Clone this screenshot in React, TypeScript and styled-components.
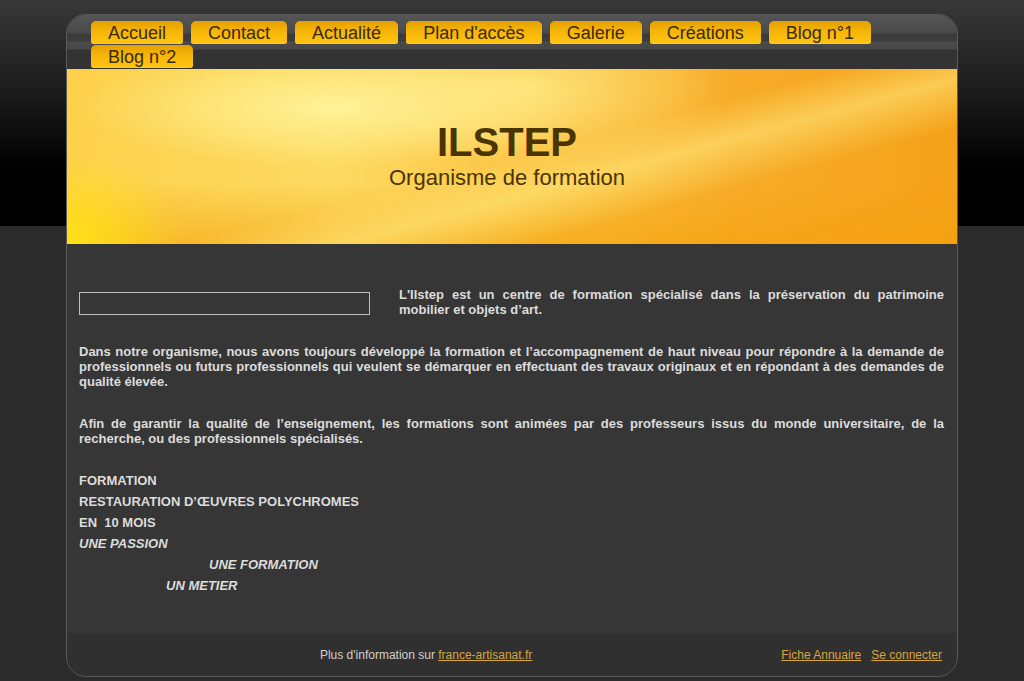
import styled, { createGlobalStyle } from 'styled-components';

const GlobalStyle = createGlobalStyle`
  html, body {
    margin: 0;
    padding: 0;
  }
  body {
    background: linear-gradient(
      to bottom,
      #383838 0,
      #1c1c1c 90px,
      #000 170px,
      #000 226px,
      #2b2b2b 226px
    );
    background-color: #2b2b2b;
    font-family: 'Liberation Sans', Arial, sans-serif;
  }
`;

const Page = styled.div`
  padding: 14px 0 5px;
`;

const Frame = styled.div`
  width: 890px;
  margin: 0 auto;
  border: 1px solid #5a5a5a;
  border-radius: 20px;
  overflow: hidden;
  background: #363636;
`;

const Nav = styled.nav`
  display: flex;
  flex-wrap: wrap;
  padding: 6px 0 0 24px;
  height: 54px;
  box-sizing: border-box;
  background: linear-gradient(
    to bottom,
    #555 0,
    #4a4a4a 18px,
    #3b3b3b 19px,
    #3d3d3d 26px,
    #4b4b4b 27px,
    #474747 34px,
    #333 35px,
    #333 100%
  );
`;

const Tab = styled.a`
  display: block;
  height: 23px;
  margin: 0 8px 1px 0;
  padding: 0 17px;
  font-size: 18px;
  line-height: 24px;
  color: #3a2a00;
  text-decoration: none;
  border-radius: 5px 5px 3px 3px;
  background: linear-gradient(to bottom, #e4a000 0, #f6b508 45%, #ffc514 100%);
  box-shadow: inset 0 -1px 0 rgba(255, 210, 60, 0.6);
`;

const Banner = styled.header`
  height: 175px;
  box-sizing: border-box;
  padding: 49px 10px 0 0;
  text-align: center;
  color: #4a3400;
  background:
    radial-gradient(ellipse 260px 60px at 30% 22%, rgba(255, 246, 160, 0.85), rgba(255, 246, 160, 0) 100%),
    radial-gradient(ellipse 200px 80px at 52% 10%, rgba(255, 238, 140, 0.7), rgba(255, 238, 140, 0) 100%),
    linear-gradient(165deg, rgba(255, 255, 255, 0) 50%, rgba(255, 236, 130, 0.55) 60%, rgba(255, 255, 255, 0) 72%),
    radial-gradient(ellipse 120px 90px at 0% 100%, rgba(255, 232, 20, 0.9), rgba(255, 232, 20, 0) 100%),
    linear-gradient(to top, rgba(244, 160, 10, 0.55) 0, rgba(244, 160, 10, 0) 35%),
    linear-gradient(90deg, #fcd04a 0%, #fdda62 30%, #fbc443 52%, #f7ab28 75%, #f5a21a 100%);
`;

const Title = styled.h1`
  margin: 0;
  font-size: 40px;
  line-height: 48px;
  font-weight: bold;
`;

const Subtitle = styled.div`
  font-size: 22px;
  line-height: 24px;
`;

const Content = styled.main`
  padding: 43px 13px 37px 12px;
  color: #dcdcdc;
  font-size: 13px;
  font-weight: bold;
  line-height: 15px;
`;

const Intro = styled.div`
  display: flex;
  gap: 29px;
  margin-bottom: 27px;
`;

const EmptyBox = styled.div`
  flex: 0 0 291px;
  height: 23px;
  margin-top: 5px;
  box-sizing: border-box;
  border: 1px solid #bdbdbd;
`;

const Para = styled.p<{ $gap?: number }>`
  flex: 1;
  margin: 0 0 ${(p) => p.$gap ?? 27}px;
  text-align: justify;
`;

const List = styled.div`
  margin-top: 24px;
  line-height: 21px;
`;

const Line = styled.div<{ $italic?: boolean; $indent?: number }>`
  font-style: ${(p) => (p.$italic ? 'italic' : 'normal')};
  padding-left: ${(p) => p.$indent ?? 0}px;
  white-space: pre;
`;

const Footer = styled.footer`
  display: flex;
  align-items: center;
  height: 43px;
  padding: 0 15px 0 12px;
  background: #303030;
  font-size: 12px;
  color: #cfcfcf;
`;

const FooterInfo = styled.div`
  flex: 1;
  text-align: center;
`;

const FooterLinks = styled.div`
  display: flex;
  gap: 10px;
  margin-left: 8px;
`;

const Link = styled.a`
  color: #d8a63a;
  text-decoration: underline;
`;

const tabs = ['Accueil', 'Contact', 'Actualité', "Plan d'accès", 'Galerie', 'Créations', 'Blog n°1', 'Blog n°2'];

export default function App() {
  return (
    <>
      <GlobalStyle />
      <Page>
        <Frame>
          <Nav>
            {tabs.map((t) => (
              <Tab key={t} href="#">
                {t}
              </Tab>
            ))}
          </Nav>
          <Banner>
            <Title>ILSTEP</Title>
            <Subtitle>Organisme de formation</Subtitle>
          </Banner>
          <Content>
            <Intro>
              <EmptyBox />
              <Para $gap={0}>
                L'Ilstep est un centre de formation spécialisé dans la préservation du patrimoine mobilier et objets d’art.
              </Para>
            </Intro>
            <Para>
              Dans notre organisme, nous avons toujours développé la formation et l’accompagnement de haut niveau pour
              répondre à la demande de professionnels ou futurs professionnels qui veulent se démarquer en effectuant des
              travaux originaux et en répondant à des demandes de qualité élevée.
            </Para>
            <Para $gap={0}>
              Afin de garantir la qualité de l’enseignement, les formations sont animées par des professeurs issus du
              monde universitaire, de la recherche, ou des professionnels spécialisés.
            </Para>
            <List>
              <Line>FORMATION</Line>
              <Line>RESTAURATION D’ŒUVRES POLYCHROMES</Line>
              <Line>EN  10 MOIS</Line>
              <Line $italic>UNE PASSION</Line>
              <Line $italic $indent={130}>UNE FORMATION</Line>
              <Line $italic $indent={87}>UN METIER</Line>
            </List>
          </Content>
          <Footer>
            <FooterInfo>
              Plus d'information sur <Link href="#">france-artisanat.fr</Link>
            </FooterInfo>
            <FooterLinks>
              <Link href="#">Fiche Annuaire</Link>
              <Link href="#">Se connecter</Link>
            </FooterLinks>
          </Footer>
        </Frame>
      </Page>
    </>
  );
}
